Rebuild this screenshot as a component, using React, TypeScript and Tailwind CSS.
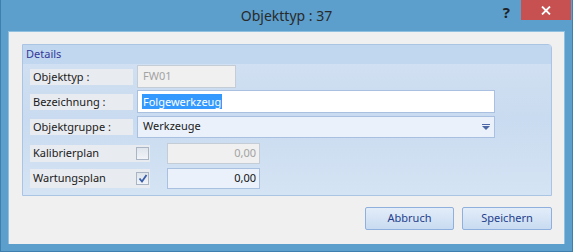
import React from "react";

const font = { fontFamily: '"Noto Sans", "Open Sans", sans-serif' };

function Label({ text, w }: { text: string; w: string }) {
  return (
    <div className={`h-[16px] ${w} bg-[#e8ebf0] flex items-center pl-[3px] text-[11px] text-[#1a1a1a] leading-none`}>
      {text}
    </div>
  );
}

function CheckBox({ checked }: { checked: boolean }) {
  return (
    <div className="w-[13px] h-[13px] border border-[#a9b4c4] bg-gradient-to-b from-[#dfe5ec] to-[#f1f4f8] flex items-center justify-center">
      {checked && (
        <svg width="10" height="9" viewBox="0 0 10 9">
          <path d="M1.5 4.5 L4 7.5 L8.5 1" stroke="#3b5ea8" strokeWidth="1.8" fill="none" />
        </svg>
      )}
    </div>
  );
}

export default function App() {
  return (
    <div className="w-[573px] h-[252px] bg-[#5c9fcc] flex flex-col border-l border-r border-b border-[#3f7fb0] box-border" style={font}>
      <div className="h-[31px] shrink-0 relative flex items-center justify-center">
        <span className="text-[14px] text-[#2a2a2a]">Objekttyp : 37</span>
        <div className="absolute right-[1px] top-0 flex items-start">
          <span className="text-[15px] font-bold text-[#1f2328] mr-[11px] mt-[2px] leading-[20px]">?</span>
          <div className="w-[50px] h-[20px] bg-[#c75050] flex items-center justify-center">
            <svg width="10" height="9" viewBox="0 0 10 9">
              <path d="M1 0.5 L9 8.5 M9 0.5 L1 8.5" stroke="#ffffff" strokeWidth="1.8" />
            </svg>
          </div>
        </div>
      </div>
      <div className="mx-[7px] h-[213px] bg-[#f0f0f0] border-l border-t border-r border-[#8fc0df] flex flex-col pl-[13px] pr-[12px] pt-[12px]">
        <div className="h-[152px] border border-[#aac4e4] rounded-tr-[4px] flex flex-col bg-gradient-to-b from-[#d3e1f2] via-[#c9dbf0] to-[#d5e4f4]">
          <div className="h-[19px] bg-[#c1d7ef] flex items-center pl-[3px] text-[11px] text-[#33399a] shrink-0">
            Details
          </div>
          <div className="flex flex-col pl-[7px] pt-[1px] gap-[2px]">
            <div className="h-[23px] flex items-center gap-[4px]">
              <Label text="Objekttyp :" w="w-[103px]" />
              <div className="h-[23px] w-[99px] bg-[#f0f0f0] border border-[#c4ccd6] flex items-center pl-[5px] text-[11px] text-[#a3a3a3]">
                FW01
              </div>
            </div>
            <div className="h-[23px] flex items-center gap-[4px]">
              <Label text="Bezeichnung :" w="w-[103px]" />
              <div className="h-[23px] w-[358px] bg-white border border-[#a9c0e0] flex items-center pl-[4px] text-[11px]">
                <span className="bg-[#3399ff] text-white px-[1px] leading-[15px]">Folgewerkzeug</span>
              </div>
            </div>
            <div className="h-[23px] flex items-center gap-[4px]">
              <Label text="Objektgruppe :" w="w-[103px]" />
              <div className="h-[22px] w-[358px] bg-[#eaf1fb] border border-[#a9c0e0] flex items-center justify-between pl-[5px] pr-[4px] text-[11px] text-[#1a1a1a]">
                <span>Werkzeuge</span>
                <svg width="8" height="6" viewBox="0 0 8 6">
                  <rect x="0" y="0" width="8" height="1" fill="#4b67a6" />
                  <path d="M0 2 L8 2 L4 6 Z" fill="#4b67a6" />
                </svg>
              </div>
            </div>
            <div className="h-[22px] mt-[2px] flex items-center gap-[17px]">
              <div className="h-[17px] w-[120px] bg-[#e8ebf0] flex items-center justify-between pl-[3px] pr-[1px] text-[11px] text-[#1a1a1a]">
                <span>Kalibrierplan</span>
                <CheckBox checked={false} />
              </div>
              <div className="h-[21px] w-[93px] bg-[#f0f0f0] border border-[#c4ccd6] flex items-center justify-end pr-[3px] text-[11px] text-[#a3a3a3]">
                0,00
              </div>
            </div>
            <div className="h-[22px] mt-[1px] flex items-center gap-[17px]">
              <div className="h-[19px] w-[120px] bg-[#e8ebf0] flex items-center justify-between pl-[3px] pr-[1px] text-[11px] text-[#1a1a1a]">
                <span>Wartungsplan</span>
                <CheckBox checked={true} />
              </div>
              <div className="h-[21px] w-[93px] bg-[#eaf1fb] border border-[#a9c0e0] flex items-center justify-end pr-[3px] text-[11px] text-[#111]">
                0,00
              </div>
            </div>
          </div>
        </div>
        <div className="flex justify-end gap-[8px] mt-[11px] pr-[0px]">
          <div className="w-[89px] h-[23px] border border-[#8fb0dc] rounded-[2px] bg-gradient-to-b from-[#e3edf9] to-[#c8dbf1] flex items-center justify-center text-[11px] text-[#24408c]">
            Abbruch
          </div>
          <div className="w-[90px] h-[23px] border border-[#8fb0dc] rounded-[2px] bg-gradient-to-b from-[#e3edf9] to-[#c8dbf1] flex items-center justify-center text-[11px] text-[#24408c]">
            Speichern
          </div>
        </div>
      </div>
    </div>
  );
}
